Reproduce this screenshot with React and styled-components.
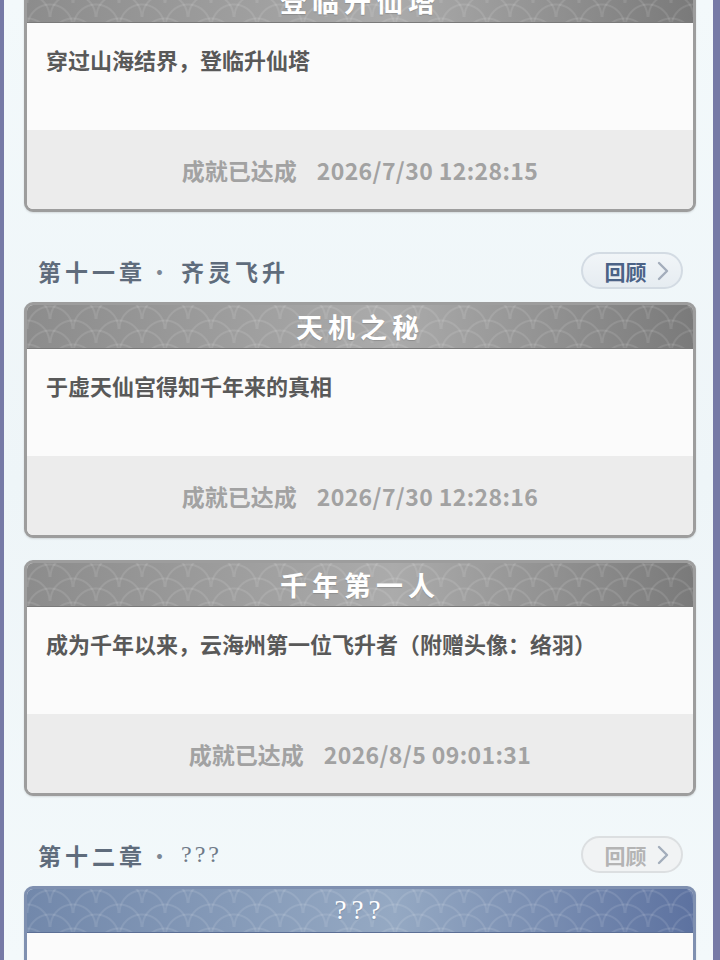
import styled, { createGlobalStyle, css } from "styled-components";

const GlobalStyle = createGlobalStyle`
  html, body {
    margin: 0;
    padding: 0;
    background: #f2f8fa;
  }
  * { box-sizing: border-box; }
`;

const Frame = styled.div`
  height: 960px;
  overflow: hidden;
  border-left: 4px solid #767aa6;
  border-right: 7px solid #767aa6;
  background: linear-gradient(180deg, #f3f9fb, #eef5f8 50%, #f3f9fb);
  font-family: "Noto Sans CJK SC", "Noto Sans", sans-serif;
`;

const List = styled.div`
  display: flex;
  flex-direction: column;
  padding: 0 17px 0 20px;
  margin-top: -24px;
`;

const SectionRow = styled.div`
  display: flex;
  align-items: center;
  justify-content: space-between;
  height: 37px;
  margin: 40px 0 13px;
  padding: 0 13px 0 14px;
`;

const SectionTitle = styled.div`
  font-size: 23px;
  font-weight: 700;
  letter-spacing: 4px;
  color: #5f6c7c;
  display: flex;
  align-items: center;
`;

const Dot = styled.span`
  margin: 0 6px 0 2px;
  font-weight: 400;
  color: #7d8794;
`;

const Unknown = styled.span`
  font-family: "Liberation Serif", serif;
  font-weight: 400;
  font-size: 24px;
  letter-spacing: 3px;
  color: #6f7a88;
`;

const ReviewButton = styled.div`
  width: 102px;
  height: 37px;
  border-radius: 19px;
  border: 2px solid #d3dbe3;
  background: linear-gradient(180deg, #f1f5f8, #e6ecf1);
  display: flex;
  align-items: center;
  justify-content: center;
  gap: 9px;
  padding-left: 10px;
  font-size: 21px;
  font-weight: 700;
  color: ${({ $disabled }) => ($disabled ? "#b4b4b4" : "#4b6286")};
  ${({ $disabled }) =>
    $disabled &&
    css`
      background: #f1f3f4;
      border-color: #dcdfe1;
    `}
`;

const Card = styled.div`
  border: 3px solid ${({ $locked }) => ($locked ? "#7f90b0" : "#9d9d9d")};
  border-radius: 9px;
  overflow: hidden;
  background: #fbfbfb;
  box-shadow: 0 1px 2px rgba(0, 0, 0, 0.12);
  & + & {
    margin-top: 22px;
  }
`;

const arc = "transparent 21px, rgba(255,255,255,0.1) 22px, rgba(255,255,255,0.1) 23px, transparent 24px";

const CardHeader = styled.div`
  height: 44px;
  display: flex;
  align-items: center;
  justify-content: center;
  color: #fff;
  font-size: 27px;
  font-weight: 700;
  letter-spacing: 5px;
  text-shadow: 0 1px 1px rgba(0, 0, 0, 0.15);
  background:
    radial-gradient(circle at 50% 100%, ${arc}) 0 0 / 46px 24px,
    radial-gradient(circle at 50% 100%, ${arc}) 23px 14px / 46px 24px,
    ${({ $locked }) =>
      $locked
        ? "linear-gradient(90deg, #7288ab, #95a9c3 55%, #5d72a0)"
        : "linear-gradient(90deg, #8c8c8c, #ababab 55%, #7a7a7a)"};
  border-bottom: 1px solid ${({ $locked }) => ($locked ? "#5c6f95" : "#7a7a7a")};
`;

const LockedTitle = styled.span`
  font-family: "Liberation Serif", serif;
  font-weight: 400;
  font-size: 27px;
  letter-spacing: 5px;
`;

const CardBody = styled.div`
  height: 107px;
  padding: 23px 19px 0;
  font-size: 22px;
  font-weight: 700;
  line-height: 26px;
  color: #595959;
  background: #fbfbfb;
`;

const CardFooter = styled.div`
  height: 79px;
  display: flex;
  align-items: center;
  justify-content: center;
  gap: 20px;
  background: #ececec;
  color: #a2a2a2;
  font-size: 23px;
  font-weight: 600;
`;

const Date = styled.span`
  letter-spacing: 0.4px;
`;

const Chevron = () => (
  <svg width="14" height="22" viewBox="0 0 14 22">
    <path d="M3 3 L11 11 L3 19" fill="none" stroke="#a3adbb" strokeWidth="2.4" strokeLinecap="round" strokeLinejoin="round" />
  </svg>
);

const Achievement = ({ title, desc, time }) => (
  <Card>
    <CardHeader>{title}</CardHeader>
    <CardBody>{desc}</CardBody>
    <CardFooter>
      <span>成就已达成</span>
      <Date>{time}</Date>
    </CardFooter>
  </Card>
);

const Section = ({ chapter, name, disabled }) => (
  <SectionRow>
    <SectionTitle>
      {chapter}
      <Dot>·</Dot>
      {name === "???" ? <Unknown>???</Unknown> : name}
    </SectionTitle>
    <ReviewButton $disabled={disabled}>
      回顾
      <Chevron />
    </ReviewButton>
  </SectionRow>
);

export default function App() {
  return (
    <>
      <GlobalStyle />
      <Frame>
        <List>
          <Achievement title="登临升仙塔" desc="穿过山海结界，登临升仙塔" time="2026/7/30 12:28:15" />
          <Section chapter="第十一章" name="齐灵飞升" />
          <Achievement title="天机之秘" desc="于虚天仙宫得知千年来的真相" time="2026/7/30 12:28:16" />
          <Achievement title="千年第一人" desc="成为千年以来，云海州第一位飞升者（附赠头像：络羽）" time="2026/8/5 09:01:31" />
          <Section chapter="第十二章" name="???" disabled />
          <Card $locked>
            <CardHeader $locked>
              <LockedTitle>???</LockedTitle>
            </CardHeader>
            <CardBody />
          </Card>
        </List>
      </Frame>
    </>
  );
}
